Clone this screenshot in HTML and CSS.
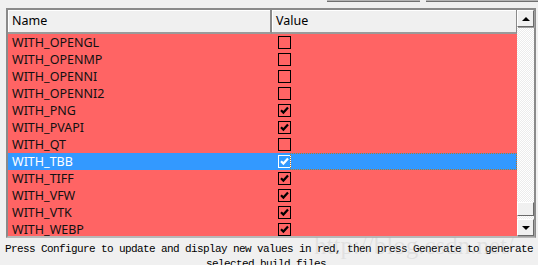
FILE: index.html
```html
<!DOCTYPE html>
<html>
<head>
    <link rel="stylesheet" href="styles.css">
</head>
<body>
    <div class="topbar">
        <div class="btn-edge first"></div>
        <div class="btn-edge second"></div>
    </div>

    <div class="frame">
        <div class="list">
            <div class="header">
                <div class="hcell name-col">Name</div>
                <div class="hcell value-col">Value</div>
            </div>

            <div class="rows" id="rows"></div>
        </div>

        <div class="scroll">
            <div class="sbtn up"><span class="tri-up"></span></div>
            <div class="track"></div>
            <div class="thumb"></div>
            <div class="sbtn down"><span class="tri-down"></span></div>
        </div>
    </div>

    <div class="status">
        <p>Press Configure to update and display new values in red, then press Generate to generate selected build files.</p>
        <span class="watermark">http://blog.csdn.net/</span>
    </div>

    <script>
        const options = [
            ['WITH_OPENGL', false],
            ['WITH_OPENMP', false],
            ['WITH_OPENNI', false],
            ['WITH_OPENNI2', false],
            ['WITH_PNG', true],
            ['WITH_PVAPI', true],
            ['WITH_QT', false],
            ['WITH_TBB', true, true],
            ['WITH_TIFF', true],
            ['WITH_VFW', true],
            ['WITH_VTK', true],
            ['WITH_WEBP', true]
        ];

        const tick = '<svg width="9" height="9" viewBox="0 0 9 9"><path d="M1 4.2 L3.4 6.6 L8 1.6" fill="none" stroke="currentColor" stroke-width="2.2"/></svg>';
        const rows = document.getElementById('rows');

        for (const opt of options) {
            const row = document.createElement('div');
            row.className = opt[2] ? 'row selected' : 'row';
            row.innerHTML = `<div class="cell name-col">${opt[0]}</div>
                <div class="cell value-col"><span class="box">${opt[1] ? tick : ''}</span></div>`;
            rows.appendChild(row);
        }
    </script>
</body>
</html>
```

FILE: styles.css
```css
body {
    margin: 0;
    background-color: #f0f0f0;
    font-family: "Noto Sans", "Liberation Sans", sans-serif;
    font-size: 12.5px;
    color: #111;
    overflow: hidden;
    width: 538px;
    height: 265px;
}

.topbar {
    height: 8px;
    display: flex;
}

.btn-edge {
    height: 1px;
    background-color: #b4b4b4;
    border-bottom: 1px solid #707070;
}

.btn-edge.first {
    margin-left: 327px;
    width: 93px;
}

.btn-edge.second {
    margin-left: 6px;
    width: 112px;
}

.frame {
    margin-left: 6px;
    width: 526px;
    height: 226px;
    border: 2px solid #8a8a8a;
    border-bottom-color: #b8b8b8;
    display: flex;
    background-color: #ff6464;
}

.list {
    width: 509px;
    overflow: hidden;
}

.header {
    display: grid;
    grid-template-columns: 264px 245px;
    height: 24px;
    background-color: #f0f0f0;
}

.hcell {
    box-sizing: border-box;
    height: 24px;
    line-height: 22px;
    padding-left: 4px;
    border-right: 1px solid #8a8a8a;
    border-bottom: 2px solid #9a9a9a;
    box-shadow: inset 1px 1px 0 #ffffff;
    color: #000;
}

.hcell.name-col {
    border-right: 2px solid #8a8a8a;
}

.row {
    display: grid;
    grid-template-columns: 264px 245px;
    height: 17px;
    line-height: 17px;
}

.cell {
    padding-left: 4px;
    white-space: nowrap;
}

.row .value-col {
    padding-left: 6px;
    display: flex;
    align-items: center;
}

.box {
    width: 11px;
    height: 11px;
    border: 1px solid #000;
    display: flex;
    align-items: center;
    justify-content: center;
    color: #000;
}

.row.selected {
    background-color: #3399ff;
    color: #fff;
}

.row.selected .box {
    border-color: #fff;
    color: #fff;
}

.row.selected .value-col {
    outline: 1px dotted #c07020;
    outline-offset: -1px;
    margin-left: 18px;
    padding-left: 0;
}

.row.selected .value-col .box {
    margin-left: -12px;
}

.scroll {
    width: 17px;
    display: flex;
    flex-direction: column;
    background-color: #fafafa;
    background-image: repeating-conic-gradient(#ffffff 0 25%, #ececec 0 50%);
    background-size: 2px 2px;
}

.sbtn {
    height: 15px;
    background-color: #f0f0f0;
    border: 1px solid #ffffff;
    border-right-color: #6a6a6a;
    border-bottom-color: #6a6a6a;
    box-shadow: 1px 1px 0 #a0a0a0;
    display: flex;
    align-items: center;
    justify-content: center;
}

.track {
    flex: 1;
}

.thumb {
    height: 12px;
    margin-bottom: 3px;
    background-color: #f0f0f0;
    border: 1px solid #ffffff;
    border-right-color: #6a6a6a;
    border-bottom-color: #6a6a6a;
}

.tri-up {
    border-left: 4px solid transparent;
    border-right: 4px solid transparent;
    border-bottom: 4px solid #000;
}

.tri-down {
    border-left: 4px solid transparent;
    border-right: 4px solid transparent;
    border-top: 4px solid #000;
}

.status {
    position: relative;
    padding-top: 4px;
}

.status p {
    margin: 0;
    text-align: center;
    font-family: "Liberation Mono", "DejaVu Sans Mono", monospace;
    font-size: 11px;
    letter-spacing: -0.6px;
    line-height: 15px;
    color: #000;
}

.watermark {
    position: absolute;
    left: 314px;
    top: -6px;
    font-family: "Liberation Serif", serif;
    font-size: 25px;
    color: rgba(170, 170, 170, 0.22);
    white-space: nowrap;
}
```
